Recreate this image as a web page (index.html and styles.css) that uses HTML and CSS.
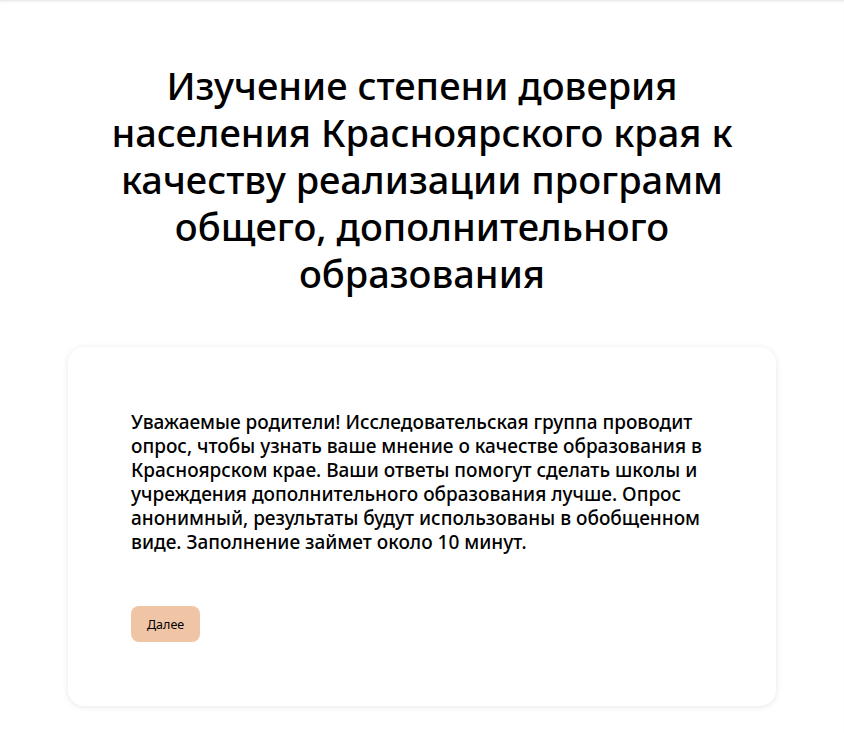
FILE: index.html
```html
<!DOCTYPE html>
<html lang="ru">
<head>
    <meta charset="UTF-8">
    <meta name="viewport" content="width=device-width, initial-scale=1.0">
    <title>Опрос</title>
    <link rel="stylesheet" href="styles.css">
</head>
<body>
    <div class="page">
        <h1 class="title">Изучение степени доверия населения Красноярского края к качеству реализации программ общего, дополнительного образования</h1>
        <div class="card">
            <p class="intro">Уважаемые родители! Исследовательская группа проводит опрос, чтобы узнать ваше мнение о качестве образования в Красноярском крае. Ваши ответы помогут сделать школы и учреждения дополнительного образования лучше. Опрос анонимный, результаты будут использованы в обобщенном виде. Заполнение займет около 10 минут.</p>
            <button class="next-btn">Далее</button>
        </div>
    </div>
</body>
</html>
```

FILE: styles.css
```css
body {
    margin: 0;
    padding: 0;
    background-color: #fff;
    font-family: "Noto Sans", "Open Sans", sans-serif;
    color: #000;
}

.page {
    box-sizing: border-box;
    min-height: 733px;
    padding: 62px 68px 20px;
    box-shadow: inset 0 3px 3px -2px rgba(0, 0, 0, 0.12);
}

.title {
    margin: 0 auto 50px;
    max-width: 660px;
    text-align: center;
    font-size: 38px;
    line-height: 47px;
    font-weight: 500;
}

.card {
    border-radius: 16px;
    padding: 63px 63px 64px;
    box-shadow: 0 1px 6px rgba(0, 0, 0, 0.1);
}

.intro {
    margin: 0 0 52px;
    font-size: 19px;
    line-height: 24px;
    font-weight: 500;
}

.next-btn {
    height: 36px;
    padding: 0 16px;
    border: none;
    border-radius: 8px;
    background-color: #f0c5a5;
    font-family: inherit;
    font-size: 12.5px;
    color: #000;
    cursor: pointer;
}
```
